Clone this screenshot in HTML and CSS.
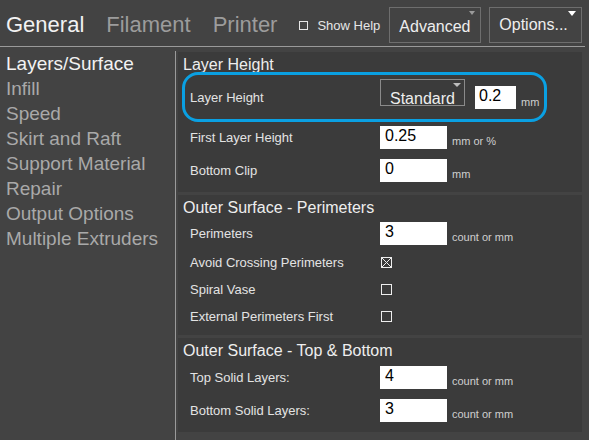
FILE: index.html
```html
<!DOCTYPE html>
<html>
<head>
<meta charset="utf-8">
<link rel="stylesheet" href="styles.css">
</head>
<body>
<div class="topbar">
  <div class="tab active">General</div>
  <div class="tab">Filament</div>
  <div class="tab">Printer</div>
  <div class="showhelp"><span class="cb"></span><span>Show Help</span></div>
  <div class="btn btn-adv">Advanced<span class="tri tri-grey"></span></div>
  <div class="btn btn-opt">Options...<span class="tri tri-white"></span></div>
</div>
<div class="main">
  <div class="sidebar">
    <div class="navitem active">Layers/Surface</div>
    <div class="navitem">Infill</div>
    <div class="navitem">Speed</div>
    <div class="navitem">Skirt and Raft</div>
    <div class="navitem">Support Material</div>
    <div class="navitem">Repair</div>
    <div class="navitem">Output Options</div>
    <div class="navitem">Multiple Extruders</div>
  </div>
  <div class="content">
    <div class="section s1">
      <h2>Layer Height</h2>
      <div class="row r1">
        <div class="label">Layer Height</div>
        <div class="select">Standard<span class="tri tri-light"></span></div>
        <div class="input small">0.2</div>
        <div class="unit">mm</div>
      </div>
      <div class="row">
        <div class="label">First Layer Height</div>
        <div class="input">0.25</div>
        <div class="unit">mm or %</div>
      </div>
      <div class="row">
        <div class="label">Bottom Clip</div>
        <div class="input">0</div>
        <div class="unit">mm</div>
      </div>
    </div>
    <div class="section">
      <h2>Outer Surface - Perimeters</h2>
      <div class="row r-p">
        <div class="label">Perimeters</div>
        <div class="input">3</div>
        <div class="unit">count or mm</div>
      </div>
      <div class="row r-cb">
        <div class="label">Avoid Crossing Perimeters</div>
        <svg class="check" width="11" height="11" viewBox="0 0 11 11"><rect x="0.5" y="0.5" width="10" height="10" fill="none" stroke="#eeeeee"/><path d="M0.5 0.5L10.5 10.5M10.5 0.5L0.5 10.5" stroke="#eeeeee" stroke-width="1"/></svg>
      </div>
      <div class="row r-cb">
        <div class="label">Spiral Vase</div>
        <svg class="check" width="11" height="11" viewBox="0 0 11 11"><rect x="0.5" y="0.5" width="10" height="10" fill="none" stroke="#eeeeee"/></svg>
      </div>
      <div class="row r-cb">
        <div class="label">External Perimeters First</div>
        <svg class="check" width="11" height="11" viewBox="0 0 11 11"><rect x="0.5" y="0.5" width="10" height="10" fill="none" stroke="#eeeeee"/></svg>
      </div>
    </div>
    <div class="section">
      <h2>Outer Surface - Top &amp; Bottom</h2>
      <div class="row">
        <div class="label">Top Solid Layers:</div>
        <div class="input">4</div>
        <div class="unit">count or mm</div>
      </div>
      <div class="row">
        <div class="label">Bottom Solid Layers:</div>
        <div class="input">3</div>
        <div class="unit">count or mm</div>
      </div>
    </div>
  </div>
</div>
<div class="highlight"></div>
</body>
</html>
```
FILE: styles.css
```css
* { box-sizing: border-box; }
html, body { margin: 0; padding: 0; }
body {
  width: 589px;
  height: 440px;
  overflow: hidden;
  background: #434343;
  font-family: "Liberation Sans", Arial, sans-serif;
  position: relative;
}
.topbar {
  display: flex;
  align-items: flex-start;
  width: 585px;
  height: 47px;
  border-bottom: 1px solid #9a9a9a;
}
.tab {
  font-size: 22px;
  line-height: 26px;
  margin-top: 11.5px;
  margin-right: 22px;
  color: #9c9c9c;
  white-space: nowrap;
}
.tab.active { color: #f2f2f2; margin-left: 6px; }
.showhelp {
  display: flex;
  align-items: center;
  gap: 9px;
  margin-top: 18px;
  margin-right: 9px;
  font-size: 13px;
  line-height: 15px;
  color: #e6e6e6;
  white-space: nowrap;
}
.cb {
  display: block;
  width: 9px;
  height: 9px;
  border: 1px solid #e6e6e6;
}
.btn {
  position: relative;
  height: 36px;
  margin-top: 7px;
  border: 1px solid #6e6e6e;
  color: #eeeeee;
  font-size: 16px;
  line-height: 18px;
  white-space: nowrap;
}
.btn-adv { width: 92px; padding: 9.5px 0 0 9px; margin-right: 8px; }
.btn-opt { width: 93px; padding: 7.5px 0 0 9px; }
.tri {
  position: absolute;
  width: 0;
  height: 0;
}
.tri-grey {
  left: 79px;
  top: 3px;
  border-left: 3.5px solid transparent;
  border-right: 3.5px solid transparent;
  border-top: 4px solid #9a9a9a;
}
.tri-white {
  left: 78px;
  top: 3px;
  border-left: 4px solid transparent;
  border-right: 4px solid transparent;
  border-top: 5px solid #ffffff;
}
.tri-light {
  left: 72px;
  top: 2.5px;
  border-left: 4px solid transparent;
  border-right: 4px solid transparent;
  border-top: 4px solid #bdbdbd;
}
.main {
  display: flex;
  height: 393px;
}
.sidebar {
  width: 176px;
  flex-shrink: 0;
  margin-top: 4px;
  border-right: 1px solid #9a9a9a;
  padding-left: 6px;
}
.navitem {
  font-size: 19px;
  line-height: 25px;
  color: #a9a9a9;
  white-space: nowrap;
}
.navitem.active { color: #f2f2f2; }
.content {
  flex: 1;
  padding: 5px 7px 0 2px;
  display: flex;
  flex-direction: column;
  gap: 3px;
}
.section {
  background: #3b3b3b;
  padding: 3px 0 5px 0;
}
.section h2 {
  margin: 0;
  font-size: 16px;
  line-height: 20px;
  font-weight: normal;
  color: #eeeeee;
  padding-left: 5px;
  white-space: nowrap;
}
.row {
  display: flex;
  align-items: center;
  height: 33px;
  padding-left: 12px;
}
.row.r1 { height: 46px; align-items: flex-start; }
.row.r-p { height: 31px; }
.row.r-cb { height: 27px; }
.label {
  width: 190px;
  flex-shrink: 0;
  font-size: 13px;
  line-height: 15px;
  color: #e3e3e3;
  white-space: nowrap;
}
.r1 .label { margin-top: 15px; }
.input {
  width: 67px;
  height: 23px;
  background: #ffffff;
  color: #000000;
  font-size: 16px;
  line-height: 18px;
  padding: 1px 0 0 5px;
}
.input.small { width: 41px; padding-left: 4px; margin-left: 10px; margin-top: 11px; }
.select {
  position: relative;
  width: 85px;
  height: 27px;
  margin-top: 4px;
  border: 1px solid #8a8a8a;
  font-size: 16px;
  line-height: 18px;
  color: #eeeeee;
  padding: 9.5px 0 0 9px;
}
.unit {
  font-size: 11px;
  line-height: 13px;
  color: #cfcfcf;
  margin-left: 5px;
  margin-top: 8px;
  white-space: nowrap;
}
.r1 .unit { margin-top: 21px; }
.check { display: block; margin-left: 1px; }
.highlight {
  position: absolute;
  left: 182px;
  top: 72px;
  width: 365px;
  height: 50px;
  border: 3px solid #0aa0e2;
  border-radius: 16px;
}
```
